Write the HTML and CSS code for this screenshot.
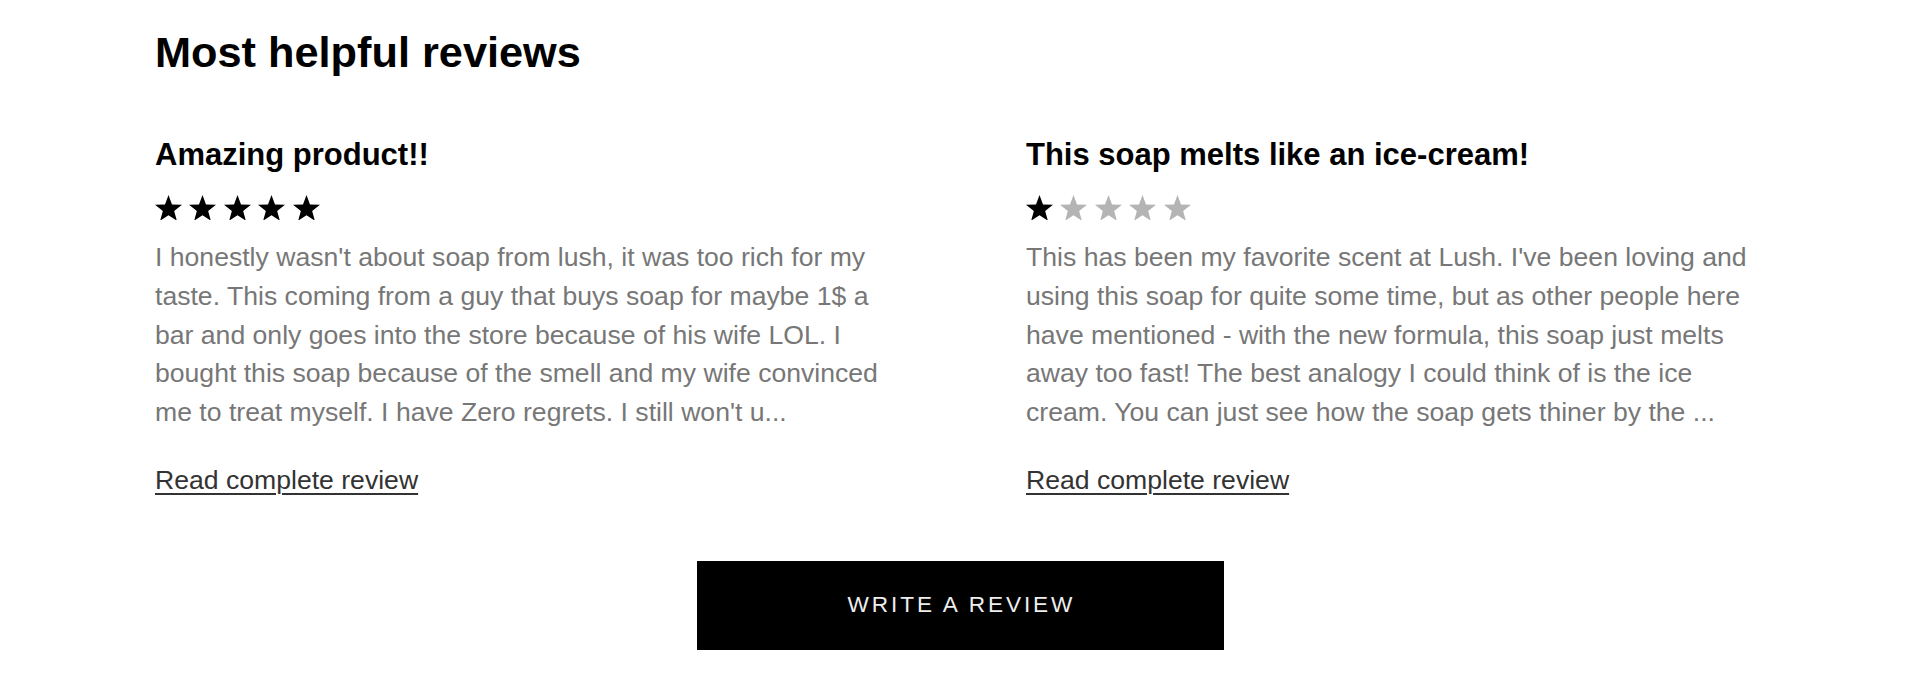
FILE: index.html
```html
<!DOCTYPE html>
<html lang="en">
<head>
<meta charset="utf-8">
<title>Most helpful reviews</title>
<link rel="stylesheet" href="styles.css">
</head>
<body>
<main class="page">
  <h1 class="heading">Most helpful reviews</h1>
  <div class="reviews">
    <article class="review">
      <h2 class="review-title">Amazing product!!</h2>
      <div class="stars" aria-label="5 out of 5 stars">
        <svg class="star on" viewBox="0 0 100 95.1"><polygon points="50,0 62.98,34.71 100,36.33 71,59.39 80.9,95.1 50,74.65 19.1,95.1 29,59.39 0,36.33 37.02,34.71"/></svg>
        <svg class="star on" viewBox="0 0 100 95.1"><polygon points="50,0 62.98,34.71 100,36.33 71,59.39 80.9,95.1 50,74.65 19.1,95.1 29,59.39 0,36.33 37.02,34.71"/></svg>
        <svg class="star on" viewBox="0 0 100 95.1"><polygon points="50,0 62.98,34.71 100,36.33 71,59.39 80.9,95.1 50,74.65 19.1,95.1 29,59.39 0,36.33 37.02,34.71"/></svg>
        <svg class="star on" viewBox="0 0 100 95.1"><polygon points="50,0 62.98,34.71 100,36.33 71,59.39 80.9,95.1 50,74.65 19.1,95.1 29,59.39 0,36.33 37.02,34.71"/></svg>
        <svg class="star on" viewBox="0 0 100 95.1"><polygon points="50,0 62.98,34.71 100,36.33 71,59.39 80.9,95.1 50,74.65 19.1,95.1 29,59.39 0,36.33 37.02,34.71"/></svg>
      </div>
      <p class="review-body">I honestly wasn't about soap from lush, it was too rich for my taste. This coming from a guy that buys soap for maybe 1$ a bar and only goes into the store because of his wife LOL. I bought this soap because of the smell and my wife convinced me to treat myself. I have Zero regrets. I still won't u...</p>
      <a class="review-link" href="#">Read complete review</a>
    </article>
    <article class="review">
      <h2 class="review-title">This soap melts like an ice-cream!</h2>
      <div class="stars" aria-label="1 out of 5 stars">
        <svg class="star on" viewBox="0 0 100 95.1"><polygon points="50,0 62.98,34.71 100,36.33 71,59.39 80.9,95.1 50,74.65 19.1,95.1 29,59.39 0,36.33 37.02,34.71"/></svg>
        <svg class="star off" viewBox="0 0 100 95.1"><polygon points="50,0 62.98,34.71 100,36.33 71,59.39 80.9,95.1 50,74.65 19.1,95.1 29,59.39 0,36.33 37.02,34.71"/></svg>
        <svg class="star off" viewBox="0 0 100 95.1"><polygon points="50,0 62.98,34.71 100,36.33 71,59.39 80.9,95.1 50,74.65 19.1,95.1 29,59.39 0,36.33 37.02,34.71"/></svg>
        <svg class="star off" viewBox="0 0 100 95.1"><polygon points="50,0 62.98,34.71 100,36.33 71,59.39 80.9,95.1 50,74.65 19.1,95.1 29,59.39 0,36.33 37.02,34.71"/></svg>
        <svg class="star off" viewBox="0 0 100 95.1"><polygon points="50,0 62.98,34.71 100,36.33 71,59.39 80.9,95.1 50,74.65 19.1,95.1 29,59.39 0,36.33 37.02,34.71"/></svg>
      </div>
      <p class="review-body">This has been my favorite scent at Lush. I've been loving and using this soap for quite some time, but as other people here have mentioned - with the new formula, this soap just melts away too fast! The best analogy I could think of is the ice cream. You can just see how the soap gets thiner by the ...</p>
      <a class="review-link" href="#">Read complete review</a>
    </article>
  </div>
  <div class="actions">
    <button class="write-btn" type="button">WRITE A REVIEW</button>
  </div>
</main>
</body>
</html>
```

FILE: styles.css
```css
* { box-sizing: border-box; }

html, body {
  margin: 0;
  padding: 0;
  background: #ffffff;
}

body {
  font-family: "Liberation Sans", Arial, Helvetica, sans-serif;
  color: #000;
}

.page {
  width: 1610px;
  margin: 0 auto;
  padding-top: 25.5px;
}

.heading {
  margin: 0;
  font-size: 43.3px;
  line-height: 52px;
  font-weight: 700;
  color: #000;
}

.reviews {
  display: grid;
  grid-template-columns: 728px 728px;
  column-gap: 143px;
  margin-top: 59.5px;
}

.review {
  display: flex;
  flex-direction: column;
  align-items: flex-start;
}

.review-title {
  margin: 0;
  font-size: 31px;
  line-height: 36px;
  font-weight: 700;
  color: #000;
}

.stars {
  display: flex;
  gap: 7.4px;
  margin-top: 21.5px;
}

.star {
  width: 27px;
  height: 25.7px;
  display: block;
}

.star.on { fill: #000; }
.star.off { fill: #b4b4b4; }

.review-body {
  margin: 18.2px 0 0;
  font-size: 26.6px;
  line-height: 38.6px;
  color: #777777;
}

.review-link {
  margin-top: 29.5px;
  font-size: 26.6px;
  line-height: 38.6px;
  color: #333333;
  text-decoration: underline;
  text-decoration-thickness: 2px;
  text-underline-offset: 4px;
}

.actions {
  display: flex;
  justify-content: center;
  margin-top: 61.3px;
}

.write-btn {
  width: 527px;
  height: 89px;
  background: #000;
  color: #eeeeee;
  border: none;
  font-family: "Liberation Sans", Arial, Helvetica, sans-serif;
  font-size: 22.6px;
  letter-spacing: 2.9px;
  font-weight: 400;
  padding: 0 0 0 2.9px;
  cursor: pointer;
}
```
